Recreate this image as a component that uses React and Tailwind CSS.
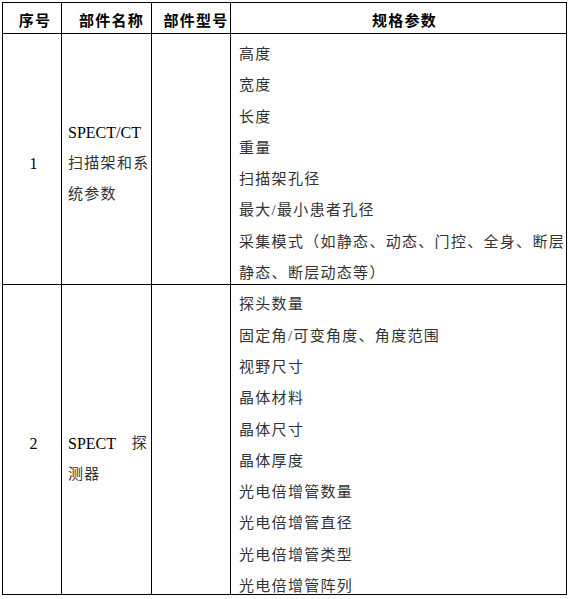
import React from "react";

const rows = [
  {
    no: "1",
    name: (
      <>
        <div className="tracking-normal text-[16px] text-black">SPECT/CT</div>
        <div>扫描架和系</div>
        <div>统参数</div>
      </>
    ),
    namePad: "pt-[8px]",
    height: "h-[251px]",
    lead: "pt-[5px] -mb-[5px]",
    specs: [
      "高度",
      "宽度",
      "长度",
      "重量",
      "扫描架孔径",
      "最大/最小患者孔径",
      "采集模式（如静态、动态、门控、全身、断层",
      "静态、断层动态等）",
    ],
  },
  {
    no: "2",
    name: (
      <>
        <div className="flex justify-between">
          <span className="tracking-normal text-[16px] text-black">SPECT</span>
          <span>探</span>
        </div>
        <div>测器</div>
      </>
    ),
    namePad: "pt-[39px]",
    height: "h-[309px]",
    lead: "pt-[4px] -mb-[8px]",
    specs: [
      "探头数量",
      "固定角/可变角度、角度范围",
      "视野尺寸",
      "晶体材料",
      "晶体尺寸",
      "晶体厚度",
      "光电倍增管数量",
      "光电倍增管直径",
      "光电倍增管类型",
      "光电倍增管阵列",
    ],
  },
];

const cell = "border border-black p-0";

export default function App() {
  return (
    <div className="bg-white w-[570px] h-[599px] pl-[2px] pt-[2px] font-['Liberation_Serif','Noto_Sans_CJK_SC',serif]">
      <table className="table-fixed border-collapse w-[564px] text-[15px] tracking-[1.3px]">
        <colgroup>
          <col className="w-[59px]" />
          <col className="w-[90px]" />
          <col className="w-[79px]" />
          <col className="w-[336px]" />
        </colgroup>
        <thead>
          <tr className="h-[31px] font-bold text-black">
            <th className={`${cell} text-center pl-[6px] pt-[7px]`}>序号</th>
            <th className={`${cell} text-center pl-[10px] pt-[7px]`}>部件名称</th>
            <th className={`${cell} text-center pl-[10px] pt-[7px]`}>部件型号</th>
            <th className={`${cell} text-center pl-[12px] pt-[7px]`}>规格参数</th>
          </tr>
        </thead>
        <tbody>
          {rows.map((r) => (
            <tr key={r.no} className={r.height}>
              <td className={`${cell} text-center align-middle text-[16px] text-black leading-[31px] tracking-normal pl-[3px] pt-[8px]`}>
                {r.no}
              </td>
              <td className={`${cell} align-middle leading-[31px] text-[#333]`}>
                <div className={`pl-[6px] pr-[3px] whitespace-nowrap ${r.namePad}`}>{r.name}</div>
              </td>
              <td className={cell}></td>
              <td className={`${cell} align-top text-[#333]`}>
                <div className={`pl-[8px] leading-[31.3px] ${r.lead}`}>
                  {r.specs.map((s, i) => (
                    <div key={i} className="whitespace-nowrap">{s}</div>
                  ))}
                </div>
              </td>
            </tr>
          ))}
        </tbody>
      </table>
    </div>
  );
}
